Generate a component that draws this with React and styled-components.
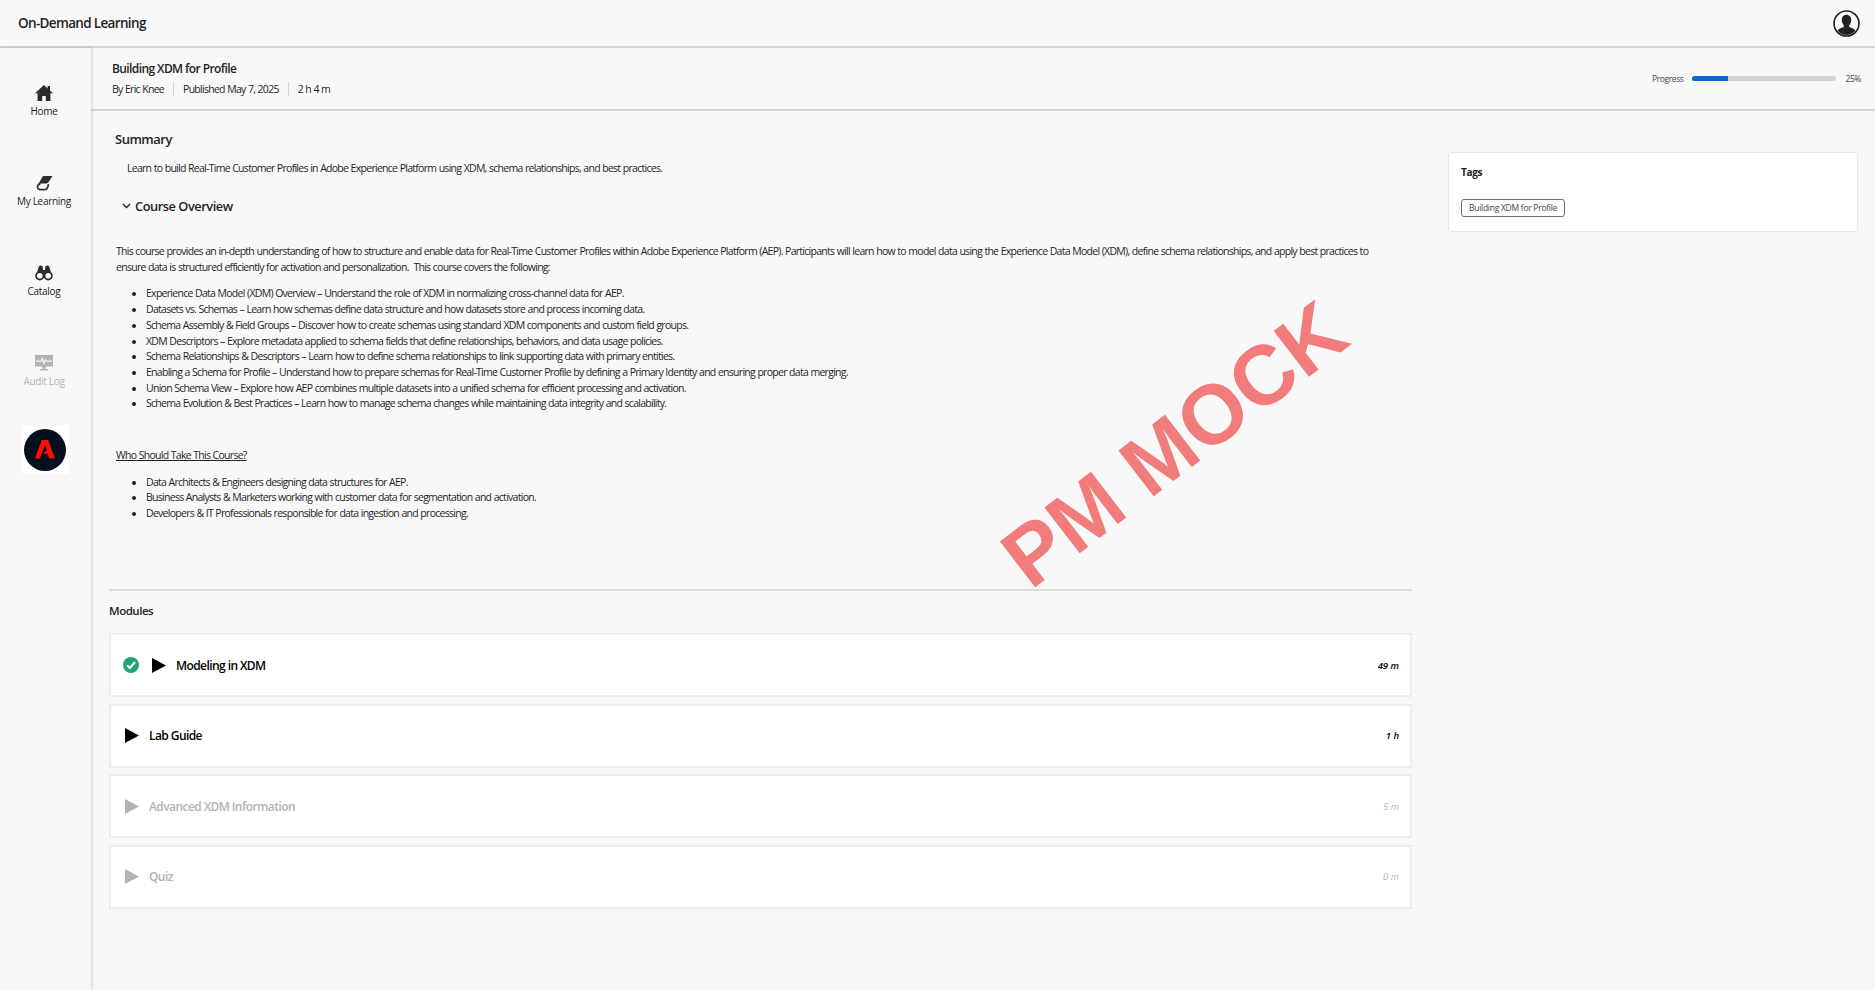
import React from 'react';
import styled, { createGlobalStyle } from 'styled-components';

const Global = createGlobalStyle`
  html, body { margin: 0; padding: 0; background: #f8f8f8; }
  body { font-family: "Open Sans", "Noto Sans", sans-serif; color: #1f1f1f; overflow: hidden; }
`;
const Page = styled.div`width: 1875px; height: 990px; position: relative; overflow: hidden; display: flex; flex-direction: column;`;
const TopBar = styled.header`height: 46px; flex: none; border-bottom: 2px solid #d5d5d5; display: flex; align-items: center; justify-content: space-between; padding: 0 15px 0 18px;`;
const Brand = styled.div`font-size: 13.5px; font-weight: 600; letter-spacing: -0.66px; color: #222;`;
const Body = styled.div`flex: 1; display: flex; min-height: 0;`;
const Side = styled.nav`width: 91px; box-sizing: border-box; flex: none; box-shadow: 1px 0 3px rgba(0,0,0,.16); display: flex; flex-direction: column; align-items: center; padding: 37px 3px 0 0; z-index: 1;`;
const NavItem = styled.div`height: 90px; display: flex; flex-direction: column; align-items: center; gap: 3px; font-size: 10px; letter-spacing: -0.3px; line-height: 14px; color: ${p => p.$off ? '#b3b3b3' : '#222'}; svg { display: block; }`;
const LogoBox = styled.div`width: 47px; height: 49px; background: #fff; margin: -20px 0 0 2px; display: flex; align-items: center; justify-content: center;`;
const Main = styled.main`flex: 1; min-width: 0; display: flex; flex-direction: column;`;
const CourseBar = styled.div`height: 63px; flex: none; box-sizing: border-box; border-bottom: 2px solid #d5d5d5; display: flex; justify-content: space-between; padding: 13px 14px 0 21px;`;
const CourseTitle = styled.div`font-size: 12px; font-weight: 600; letter-spacing: -0.6px; line-height: 16px; color: #222;`;
const Meta = styled.div`display: flex; margin-top: 5px; font-size: 10.5px; letter-spacing: -0.72px; word-spacing: 0.36px; line-height: 14px;`;
const MetaItem = styled.span`padding: 0 9px; border-left: 1px solid #d5d5d5; &:first-child { padding-left: 0; border: 0; }`;
const Progress = styled.div`display: flex; align-items: center; gap: 9px; height: 14px; margin-top: 10px; font-size: 8.5px; letter-spacing: -0.4px; color: #444;`;
const Track = styled.div`width: 144px; height: 5px; border-radius: 3px; background: #d3d3d3; overflow: hidden;`;
const Fill = styled.div`height: 100%; background: #0d66d0;`;
const Content = styled.div`flex: 1; display: flex; min-height: 0;`;
const Left = styled.div`width: 1303px; margin-left: 18px; flex: none;`;
const Right = styled.aside`margin-left: 36px; width: 410px; padding-top: 41px;`;
const SummaryWrap = styled.section`height: 480px; box-sizing: border-box; border-bottom: 2px solid #dcdcdc; padding-top: 18px;`;
const H2 = styled.h2`margin: 0 0 0 6px; font-size: 13px; line-height: 20px; font-weight: 600; letter-spacing: -0.48px; color: #222;`;
const Lead = styled.p`margin: 12px 0 0 18px; font-size: 10.5px; line-height: 14px; letter-spacing: -0.72px; word-spacing: 0.36px;`;
const Overview = styled.div`display: flex; align-items: center; gap: 4px; margin: 21px 0 0 13px; font-size: 12.8px; font-weight: 600; line-height: 20px; letter-spacing: -0.45px; color: #222;`;
const Text = styled.div`margin: 28px 20px 0 7px; font-size: 10.5px; line-height: 15.7px; letter-spacing: -0.72px; word-spacing: 0.36px;`;
const Para = styled.p`margin: 0;`;
const List = styled.ul`margin: 11px 0 0; padding: 0 0 0 30px;`;
const Who = styled.p`margin: 36px 0 0; text-decoration: underline;`;
const ModulesTitle = styled.div`margin: 11px 0 0 0; font-size: 11.5px; line-height: 18px; font-weight: 600; letter-spacing: -0.47px; color: #222;`;
const Modules = styled.div`margin-top: 13px; display: flex; flex-direction: column; gap: 6.5px;`;
const Card = styled.div`height: 64px; box-sizing: border-box; background: #fff; border: 2px solid #ededed; display: flex; align-items: center; padding: 0 11px 0 14px; color: ${p => p.$off ? '#b3b3b3' : '#000'};`;
const Status = styled.span`display: flex; margin: 0 13px 0 -2px;`;
const ModTitle = styled.div`flex: 1; font-size: 12px; font-weight: 600; letter-spacing: -0.58px; margin-left: 10px;`;
const Dur = styled.div`font-size: 9.5px; font-style: italic; font-weight: ${p => p.$off ? 400 : 600};`;
const TagCard = styled.div`box-sizing: border-box; height: 80px; background: #fff; border: 1px solid #e8e8e8; border-radius: 3px; padding: 12px 12px;`;
const TagTitle = styled.div`font-size: 10px; font-weight: 700; letter-spacing: -0.3px; line-height: 15px; color: #222;`;
const Tag = styled.span`display: inline-block; margin-top: 19px; padding: 0 7px; height: 16px; line-height: 15px; border: 1px solid #707070; border-radius: 3px; font-size: 8.5px; letter-spacing: -0.27px; color: #444;`;
const Stamp = styled.div`position: absolute; left: 1174px; top: 444px; transform: translate(-50%, -50%) rotate(-37.6deg); font-family: "Liberation Sans", Arial, sans-serif; font-weight: 700; font-size: 84px; line-height: 1; white-space: nowrap; color: #f27b7b; pointer-events: none;`;

const Play = () => (
  <svg width="14" height="15" viewBox="0 0 14 15"><path d="M0 0L14 7.5L0 15Z" fill="currentColor" /></svg>
);
const Home = () => (
  <svg width="18" height="16" viewBox="0 0 18 16"><path fill="#2c2c2c" d="M9 0L0 8.2h2.6V16h4.6v-5h3.600v5h4.600V8.200H18L15 5.500V1h-2.400v2.400z" /></svg>
);
const Book = () => (
  <svg width="17" height="16" viewBox="0 0 17 16"><path fill="#2c2c2c" d="M7 1h9.500L13 6.500C12 8 11 8.500 9.500 8.500H4.500L2 9.500z" /><path fill="none" stroke="#2c2c2c" strokeWidth="1.7" d="M4.500 8.800C2.500 9 1.300 10.500 1.500 12c.2 1.800 1.500 2.700 3 2.700h4c2 0 3.500-2.500 4-5.500" /></svg>
);
const Binoc = () => (
  <svg width="18" height="16" viewBox="0 0 18 16"><path fill="#2c2c2c" d="M4 1c1-.8 2.500-.8 3.500 0L8 5h2l.5-4c1-.8 2.500-.8 3.500 0l2 6.500-5 2.500H7L2 7.500z" /><circle cx="4.800" cy="10.800" r="3.700" fill="#f8f8f8" stroke="#2c2c2c" strokeWidth="1.800" /><circle cx="13.200" cy="10.800" r="3.700" fill="#f8f8f8" stroke="#2c2c2c" strokeWidth="1.800" /></svg>
);
const Monitor = () => (
  <svg width="18" height="16" viewBox="0 0 18 16"><path fill="#b3b3b3" d="M0 0h18v11.500H0zM7.500 11.500h3V14h2.500v1.500H5V14h2.500z" /><path fill="none" stroke="#f8f8f8" strokeWidth="1.200" d="M1 6.200h5l1.200-2.600L9 8.400l1.400-3.600.8 1.400H17" /></svg>
);
const Adobe = () => (
  <svg width="42" height="42" viewBox="0 0 42 42"><circle cx="21" cy="21" r="21" fill="#040f20" /><path fill="#fa0f00" d="M17.800 11h6.400L31 29.500h-5.600l-1.800-4.800H18.800L22.800 21l-1.800-5-5.100 13.500H11z" /></svg>
);
const Avatar = () => (
  <svg width="27" height="27" viewBox="0 0 26 26"><circle cx="13" cy="13" r="12" fill="#fff" stroke="#222" strokeWidth="1.600" /><path fill="#222" d="M13 4.500c2.900 0 4.600 2.200 4.600 5 0 2.200-.8 4-2 5.100v1.800c2.800 1 5.200 2 6 3.300A11 11 0 0 1 13 24a11 11 0 0 1-8.600-4.300c.8-1.300 3.200-2.300 6-3.300v-1.800c-1.200-1.100-2-2.900-2-5.100 0-2.800 1.700-5 4.600-5z" /></svg>
);
const Check = () => (
  <svg width="16" height="16" viewBox="0 0 16 16"><circle cx="8" cy="8" r="8" fill="#1ea672" /><path fill="none" stroke="#fff" strokeWidth="2.200" d="M4 8.200l2.800 2.800L12 5.200" /></svg>
);
const Chevron = () => (
  <svg width="9" height="6" viewBox="0 0 9 6"><path fill="none" stroke="#222" strokeWidth="1.400" d="M1 1l3.500 3.500L8 1" /></svg>
);

const covers = [
  'Experience Data Model (XDM) Overview – Understand the role of XDM in normalizing cross-channel data for AEP.',
  'Datasets vs. Schemas – Learn how schemas define data structure and how datasets store and process incoming data.',
  'Schema Assembly & Field Groups – Discover how to create schemas using standard XDM components and custom field groups.',
  'XDM Descriptors – Explore metadata applied to schema fields that define relationships, behaviors, and data usage policies.',
  'Schema Relationships & Descriptors – Learn how to define schema relationships to link supporting data with primary entities.',
  'Enabling a Schema for Profile – Understand how to prepare schemas for Real-Time Customer Profile by defining a Primary Identity and ensuring proper data merging.',
  'Union Schema View – Explore how AEP combines multiple datasets into a unified schema for efficient processing and activation.',
  'Schema Evolution & Best Practices – Learn how to manage schema changes while maintaining data integrity and scalability.',
];
const audience = [
  'Data Architects & Engineers designing data structures for AEP.',
  'Business Analysts & Marketers working with customer data for segmentation and activation.',
  'Developers & IT Professionals responsible for data ingestion and processing.',
];
const modules = [
  { title: 'Modeling in XDM', dur: '49 m', done: true },
  { title: 'Lab Guide', dur: '1 h' },
  { title: 'Advanced XDM Information', dur: '5 m', off: true },
  { title: 'Quiz', dur: '0 m', off: true },
];
const nav = [
  { label: 'Home', Icon: Home },
  { label: 'My Learning', Icon: Book },
  { label: 'Catalog', Icon: Binoc },
  { label: 'Audit Log', Icon: Monitor, off: true },
];

export default function App() {
  return (
    <Page>
      <Global />
      <TopBar>
        <Brand>On-Demand Learning</Brand>
        <Avatar />
      </TopBar>
      <Body>
        <Side>
          {nav.map(({ label, Icon, off }) => (
            <NavItem key={label} $off={off}><Icon />{label}</NavItem>
          ))}
          <LogoBox><Adobe /></LogoBox>
        </Side>
        <Main>
          <CourseBar>
            <div>
              <CourseTitle>Building XDM for Profile</CourseTitle>
              <Meta>
                <MetaItem>By Eric Knee</MetaItem>
                <MetaItem>Published May 7, 2025</MetaItem>
                <MetaItem>2 h 4 m</MetaItem>
              </Meta>
            </div>
            <Progress>
              Progress
              <Track><Fill style={{ width: '25%' }} /></Track>
              25%
            </Progress>
          </CourseBar>
          <Content>
            <Left>
              <SummaryWrap>
                <H2>Summary</H2>
                <Lead>Learn to build Real-Time Customer Profiles in Adobe Experience Platform using XDM, schema relationships, and best practices.</Lead>
                <Overview><Chevron />Course Overview</Overview>
                <Text>
                  <Para>This course provides an in-depth understanding of how to structure and enable data for Real-Time Customer Profiles within Adobe Experience Platform (AEP). Participants will learn how to model data using the Experience Data Model (XDM), define schema relationships, and apply best practices to ensure data is structured efficiently for activation and personalization.&nbsp; This course covers the following:</Para>
                  <List>{covers.map(c => <li key={c}>{c}</li>)}</List>
                  <Who>Who Should Take This Course?</Who>
                  <List>{audience.map(c => <li key={c}>{c}</li>)}</List>
                </Text>
              </SummaryWrap>
              <ModulesTitle>Modules</ModulesTitle>
              <Modules>
                {modules.map(m => (
                  <Card key={m.title} $off={m.off}>
                    {m.done && <Status><Check /></Status>}
                    <Play />
                    <ModTitle>{m.title}</ModTitle>
                    <Dur $off={m.off}>{m.dur}</Dur>
                  </Card>
                ))}
              </Modules>
            </Left>
            <Right>
              <TagCard>
                <TagTitle>Tags</TagTitle>
                <Tag>Building XDM for Profile</Tag>
              </TagCard>
            </Right>
          </Content>
        </Main>
      </Body>
      <Stamp>PM MOCK</Stamp>
    </Page>
  );
}
